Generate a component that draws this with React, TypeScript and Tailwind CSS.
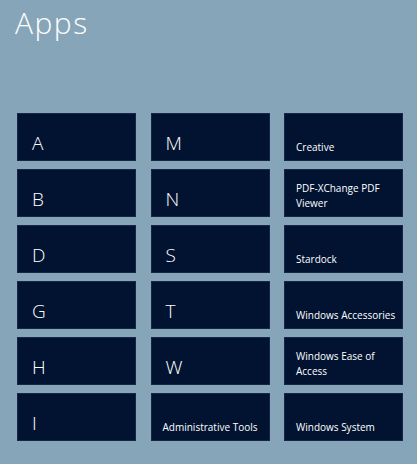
import React from "react";

const col1 = ["A", "B", "D", "G", "H", "I"];
const col2: (string | { label: string })[] = ["M", "N", "S", "T", "W", { label: "Administrative Tools" }];
const col3: React.ReactNode[] = [
  "Creative",
  <>PDF-XChange PDF<br />Viewer</>,
  "Stardock",
  "Windows Accessories",
  <>Windows Ease of<br />Access</>,
  "Windows System",
];

function LetterTile({ ch }: { ch: string }) {
  return (
    <div className="h-[48px] bg-[#011331] border border-[#16264a] flex items-end pl-[14px] pb-[7px]">
      <span className="text-white text-[19px] leading-[19px] font-light">{ch}</span>
    </div>
  );
}

function LabelTile({ children }: { children: React.ReactNode }) {
  return (
    <div className="h-[48px] bg-[#011331] border border-[#16264a] flex items-end pl-[11px] pb-[5.5px]">
      <span className="text-white text-[10px] leading-[15px] whitespace-nowrap">{children}</span>
    </div>
  );
}

export default function App() {
  return (
    <div
      className="w-[417px] h-[464px] bg-[#87a5b8] overflow-hidden"
      style={{ fontFamily: '"Open Sans", "Noto Sans", sans-serif' }}
    >
      <h1 className="text-white text-[30px] leading-none font-light tracking-[1.5px] pl-[15px] pt-[8px] h-[113px]">Apps</h1>
      <div className="grid grid-cols-[119px_119px_119px] gap-x-[14.5px] gap-y-[8px] pl-[17px]">
        {col1.map((c, i) => (
          <React.Fragment key={i}>
            <LetterTile ch={c} />
            {typeof col2[i] === "string" ? (
              <LetterTile ch={col2[i] as string} />
            ) : (
              <LabelTile>{(col2[i] as { label: string }).label}</LabelTile>
            )}
            <LabelTile>{col3[i]}</LabelTile>
          </React.Fragment>
        ))}
      </div>
    </div>
  );
}
